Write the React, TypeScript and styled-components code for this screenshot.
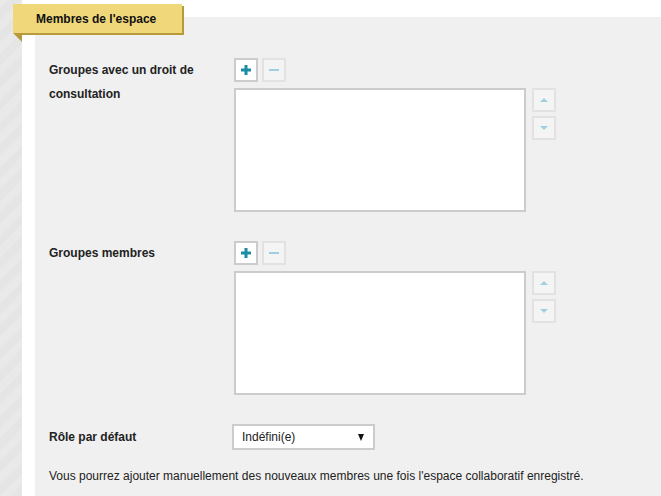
import React from 'react';
import styled, { createGlobalStyle } from 'styled-components';

const GlobalStyle = createGlobalStyle`
  html, body {
    margin: 0;
    padding: 0;
    background: #fff;
  }
  body {
    font-family: "Liberation Sans", Arial, sans-serif;
    font-size: 12px;
    color: #222;
  }
`;

type Field = {
  label: string;
};

const groupFields: Field[] = [
  { label: 'Groupes avec un droit de consultation' },
  { label: 'Groupes membres' },
];

const GroupPicker = () => (
  <Picker>
    <ToolRow>
      <IconButton aria-label="Ajouter">
        <svg width="12" height="12" viewBox="0 0 12 12">
          <path d="M4.5 1h3v3.5H11v3H7.5V11h-3V7.5H1v-3h3.5z" fill="#1b8ca6" />
        </svg>
      </IconButton>
      <IconButton $disabled aria-label="Retirer">
        <svg width="12" height="12" viewBox="0 0 12 12">
          <rect x="1" y="5" width="10" height="2" fill="#9fcfe0" />
        </svg>
      </IconButton>
    </ToolRow>
    <ListRow>
      <ListBox />
      <ArrowColumn>
        <IconButton $disabled aria-label="Monter">
          <svg width="10" height="6" viewBox="0 0 10 6">
            <path d="M1 5L5 1l4 4z" fill="#9fcfe0" />
          </svg>
        </IconButton>
        <IconButton $disabled aria-label="Descendre">
          <svg width="10" height="6" viewBox="0 0 10 6">
            <path d="M1 1h8L5 5z" fill="#9fcfe0" />
          </svg>
        </IconButton>
      </ArrowColumn>
    </ListRow>
  </Picker>
);

export default function App() {
  return (
    <>
      <GlobalStyle />
      <Page>
        <StripedRail />
        <Main>
          <Tab>
            Membres de l'espace
            <TabFold />
          </Tab>
          <Panel>
            {groupFields.map((f) => (
              <FormRow key={f.label}>
                <Label>{f.label}</Label>
                <GroupPicker />
              </FormRow>
            ))}
            <FormRow $center>
              <Label>Rôle par défaut</Label>
              <Select>
                <span>Indéfini(e)</span>
                <Caret />
              </Select>
            </FormRow>
            <Note>
              Vous pourrez ajouter manuellement des nouveaux membres une fois l'espace collaboratif enregistré.
            </Note>
          </Panel>
        </Main>
      </Page>
    </>
  );
}

// Styled Components
const Page = styled.div`
  display: flex;
  min-height: 100vh;
`;

const StripedRail = styled.div`
  width: 22px;
  flex-shrink: 0;
  background-color: #e7e7e7;
  background-image: repeating-linear-gradient(
    -45deg,
    #e5e5e5 0px,
    #e5e5e5 8px,
    #e9e9e9 8px,
    #e9e9e9 16px
  );
`;

const Main = styled.div`
  position: relative;
  flex: 1;
  padding: 17px 0 0 13px;
  display: flex;
`;

const Tab = styled.div`
  position: absolute;
  top: 4px;
  left: -9px;
  width: 146px;
  height: 29px;
  padding-left: 23px;
  display: flex;
  align-items: center;
  background: #f0d77a;
  box-shadow: 2px 2px 0 #b89a3c;
  font-weight: bold;
  font-size: 12px;
  color: #111;
  z-index: 2;
`;

const TabFold = styled.span`
  position: absolute;
  left: 0;
  top: 29px;
  width: 0;
  height: 0;
  border-top: 9px solid #b89a3c;
  border-left: 9px solid transparent;
`;

const Panel = styled.div`
  flex: 1;
  background: #f0f0f0;
  padding: 41px 0 0 14px;
  display: flex;
  flex-direction: column;
  gap: 29px;
`;

const FormRow = styled.div<{ $center?: boolean }>`
  display: grid;
  grid-template-columns: 185px auto;
  justify-content: start;
  align-items: ${(p) => (p.$center ? 'center' : 'start')};
`;

const Label = styled.div`
  max-width: 160px;
  font-weight: bold;
  font-size: 12px;
  line-height: 24px;
  color: #222;
`;

const Picker = styled.div`
  display: flex;
  flex-direction: column;
  gap: 6px;
`;

const ToolRow = styled.div`
  display: flex;
  gap: 4px;
`;

const ListRow = styled.div`
  display: flex;
  gap: 6px;
  align-items: flex-start;
`;

const ListBox = styled.div`
  width: 288px;
  height: 120px;
  background: #fff;
  border: 2px solid #cccccc;
`;

const ArrowColumn = styled.div`
  display: flex;
  flex-direction: column;
  gap: 4px;
`;

const IconButton = styled.button<{ $disabled?: boolean }>`
  box-sizing: border-box;
  width: 24px;
  height: 24px;
  padding: 0;
  display: flex;
  align-items: center;
  justify-content: center;
  background: ${(p) => (p.$disabled ? '#f4f4f4' : '#fff')};
  border: 2px solid ${(p) => (p.$disabled ? '#e2e2e2' : '#cccccc')};
  cursor: ${(p) => (p.$disabled ? 'default' : 'pointer')};
`;

const Select = styled.div`
  box-sizing: border-box;
  margin-left: -2px;
  width: 143px;
  height: 26px;
  padding: 0 9px 0 8px;
  display: flex;
  align-items: center;
  justify-content: space-between;
  background: #fff;
  border: 2px solid #cccccc;
  font-size: 12px;
  color: #222;
`;

const Caret = styled.span`
  width: 0;
  height: 0;
  border-left: 3.5px solid transparent;
  border-right: 3.5px solid transparent;
  border-top: 7px solid #111;
`;

const Note = styled.p`
  margin: -15px 0 0;
  font-size: 12px;
  line-height: 24px;
  color: #222;
`;
